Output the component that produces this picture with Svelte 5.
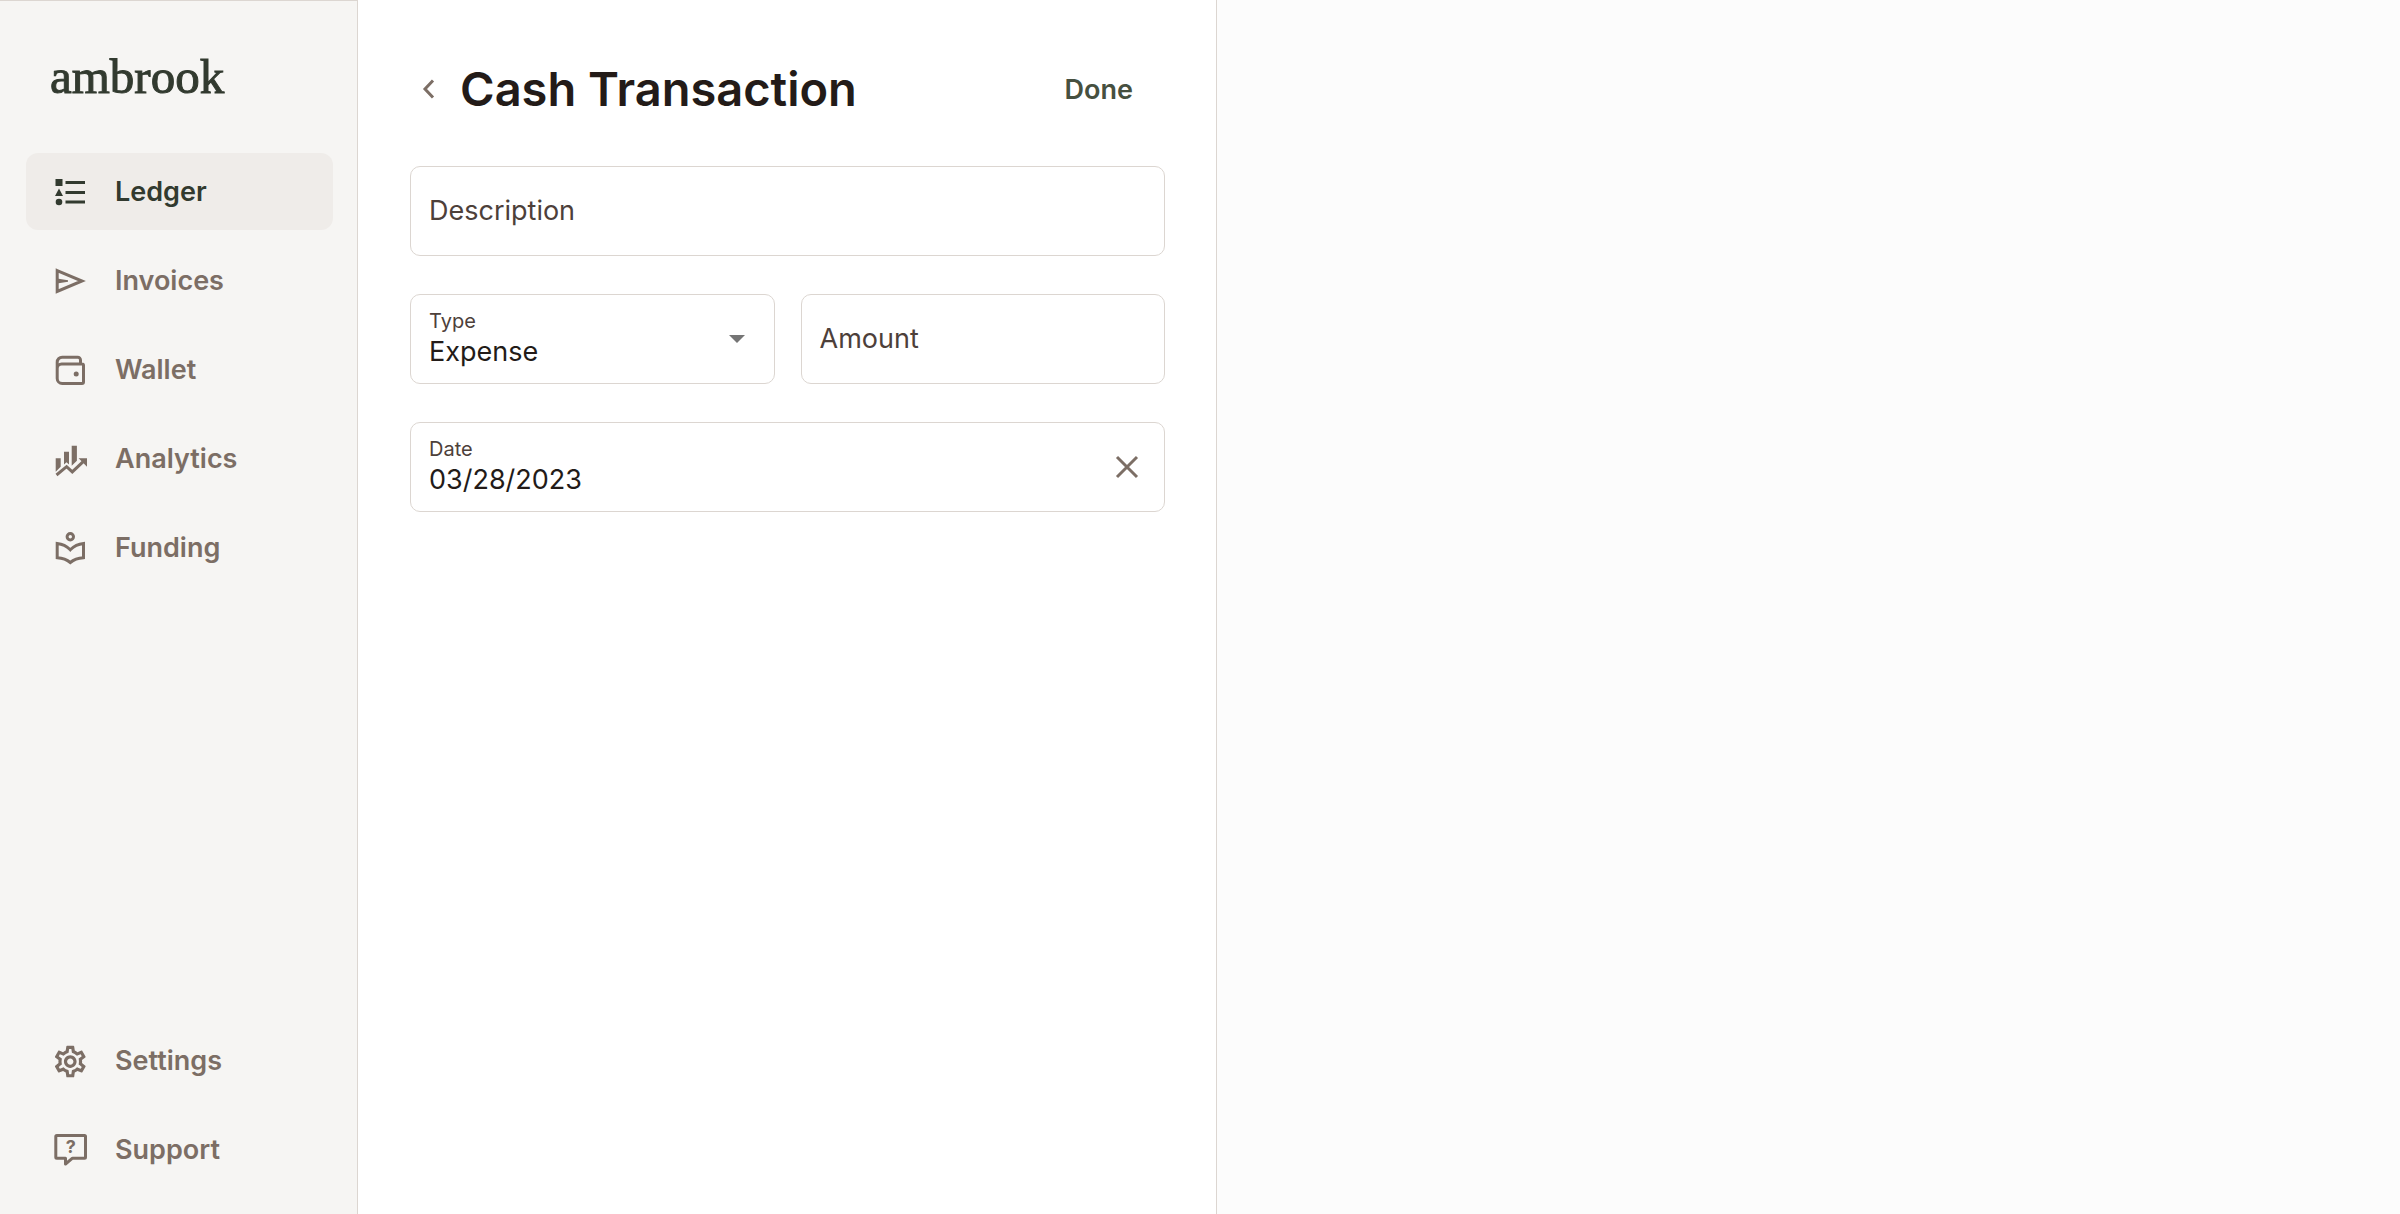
<script>
  let active = 'Ledger';

  const mainNav = ['Ledger', 'Invoices', 'Wallet', 'Analytics', 'Funding'];
  const footerNav = ['Settings', 'Support'];

  let description = '';
  let type = 'Expense';
  let amount = '';
  let date = '03/28/2023';
</script>

{#snippet icon(name)}
  <svg class="icon" viewBox="0 0 38 38" aria-hidden="true">
    {#if name === 'Ledger'}
      <path fill="currentColor" d="M4.5 6h7v7h-7zM8 15.5l4 7.5H4zM14.5 8H34v3H14.5zM14.5 18H34v3H14.5zM14.5 27.5H34v3H14.5z" />
      <circle cx="8" cy="29" r="3.3" fill="currentColor" />
    {:else if name === 'Invoices'}
      <path class="line" d="M6.2 8.6 31 19 6.2 29.4z" />
      <path fill="currentColor" d="M6 16.6 17 18.3v1.4L6 21.4z" />
    {:else if name === 'Wallet'}
      <path class="line" d="M29.5 13V9a2.8 2.8 0 0 0-2.8-2.8H11.2a5 5 0 0 0-5 5v16.3a5 5 0 0 0 5 5H31a1.5 1.5 0 0 0 1.5-1.5V14.5A1.5 1.5 0 0 0 31 13H10.7a4.5 4.5 0 0 0-4.5 4.5" />
      <circle cx="25.2" cy="23" r="2.5" fill="currentColor" />
    {:else if name === 'Analytics'}
      <path fill="currentColor" d="M4.7 18.3h5v8.5l-5 5zM13 11.7h5v12.8l-2.5-2.2-2.5 2.2zM20.7 5.7h5.2v15l-5.2 5zM27.6 18.3H36v8.4z" />
      <path class="line" d="M5.5 35 15.6 26.7l5.7 5.2L33 20.8" />
    {:else if name === 'Funding'}
      <circle class="line" cx="19.3" cy="7.8" r="3.2" />
      <path class="line" d="M6.2 14.4c5 .5 9.3 2.5 13.1 6.4 3.8-3.9 8.1-5.9 13.2-6.4v14.3c-5.1.3-9.4 1.5-13.2 4.8-3.8-3.3-8.1-4.5-13.1-4.8z" />
    {:else if name === 'Settings'}
      <path fill="currentColor" transform="translate(.3 .6) scale(1.58)" d="M19.43 12.98c.04-.32.07-.64.07-.98s-.03-.66-.07-.98l2.11-1.65c.19-.15.24-.42.12-.64l-2-3.46c-.09-.16-.26-.25-.44-.25-.06 0-.12.01-.17.03l-2.49 1c-.52-.4-1.08-.73-1.69-.98l-.38-2.65C14.46 2.18 14.25 2 14 2h-4c-.25 0-.46.18-.49.42l-.38 2.65c-.61.25-1.17.59-1.69.98l-2.49-1c-.06-.02-.12-.03-.18-.03-.17 0-.34.09-.43.25l-2 3.46c-.13.22-.07.49.12.64l2.11 1.65c-.04.32-.07.65-.07.98s.03.66.07.98l-2.11 1.65c-.19.15-.24.42-.12.64l2 3.46c.09.16.26.25.44.25.06 0 .12-.01.17-.03l2.49-1c.52.4 1.08.73 1.69.98l.38 2.65c.03.24.24.42.49.42h4c.25 0 .46-.18.49-.42l.38-2.65c.61-.25 1.17-.59 1.69-.98l2.49 1c.06.02.12.03.18.03.17 0 .34-.09.43-.25l2-3.46c.12-.22.07-.49-.12-.64l-2.11-1.65zm-1.98-1.71c.04.31.05.52.05.73 0 .21-.02.43-.05.73l-.14 1.13.89.7 1.08.84-.7 1.21-1.27-.51-1.04-.42-.9.68c-.43.32-.84.56-1.25.73l-1.06.43-.16 1.13-.2 1.35h-1.4l-.19-1.35-.16-1.13-1.06-.43c-.43-.18-.83-.41-1.23-.71l-.91-.7-1.06.43-1.27.51-.7-1.21 1.08-.84.89-.7-.14-1.13c-.03-.31-.05-.54-.05-.74s.02-.43.05-.73l.14-1.13-.89-.7-1.08-.84.7-1.21 1.27.51 1.04.42.9-.68c.43-.32.84-.56 1.25-.73l1.06-.43.16-1.13.2-1.35h1.39l.19 1.35.16 1.13 1.06.43c.43.18.83.41 1.23.71l.91.7 1.06-.43 1.27-.51.7 1.21-1.07.85-.89.7.14 1.13zM12 8c-2.21 0-4 1.79-4 4s1.79 4 4 4 4-1.79 4-4-1.79-4-4-4zm0 6c-1.1 0-2-.9-2-2s.9-2 2-2 2 .9 2 2-.9 2-2 2z" />
    {:else if name === 'Support'}
      <path class="line" stroke-linejoin="round" d="M5.8 4.5h27.7a1 1 0 0 1 1 1v20.7a1 1 0 0 1-1 1H21.5l-7 5.8v-5.8H5.8a1 1 0 0 1-1-1V5.5a1 1 0 0 1 1-1z" />
      <text x="19.7" y="22" text-anchor="middle">?</text>
    {/if}
  </svg>
{/snippet}

{#snippet navItem(name)}
  <a
    class="nav-item"
    class:active={active === name}
    href="#{name.toLowerCase()}"
    onclick={() => (active = name)}
  >
    {@render icon(name)}
    <span>{name}</span>
  </a>
{/snippet}

<div class="app">
  <aside class="sidebar">
    <a class="logo" href="#home">ambrook</a>
    <nav class="nav">
      {#each mainNav as name}
        {@render navItem(name)}
      {/each}
    </nav>
    <nav class="nav nav-footer">
      {#each footerNav as name}
        {@render navItem(name)}
      {/each}
    </nav>
  </aside>

  <main class="panel">
    <header class="header">
      <button class="back" aria-label="Back">
        <svg viewBox="0 0 16 22" aria-hidden="true"><path d="M12 2.5 4 11l8 8.5" /></svg>
      </button>
      <h1>Cash Transaction</h1>
      <button class="done" type="submit" form="transaction">Done</button>
    </header>

    <form id="transaction" class="form" onsubmit={(e) => e.preventDefault()}>
      <div class="field">
        <input id="description" type="text" placeholder=" " bind:value={description} />
        <label for="description">Description</label>
      </div>
      <div class="row">
        <div class="field">
          <select id="type" bind:value={type}>
            <option>Expense</option>
            <option>Income</option>
          </select>
          <label for="type">Type</label>
          <svg class="caret" viewBox="0 0 16 8" aria-hidden="true"><path d="M0 0h16L8 8z" /></svg>
        </div>
        <div class="field">
          <input id="amount" type="text" inputmode="decimal" placeholder=" " bind:value={amount} />
          <label for="amount">Amount</label>
        </div>
      </div>
      <div class="field">
        <input id="date" type="text" placeholder=" " bind:value={date} />
        <label for="date">Date</label>
        <button class="clear" type="button" aria-label="Clear date" onclick={() => (date = '')}>
          <svg viewBox="0 0 24 24" aria-hidden="true"><path d="M2 2l20 20M22 2 2 22" /></svg>
        </button>
      </div>
    </form>
  </main>

  <section class="detail" aria-label="Details"></section>
</div>

<style>
  :global(body) {
    margin: 0;
    background: #fcfcfc;
  }
  .app {
    display: flex;
    min-height: 100vh;
    font-family: Inter, 'Liberation Sans', sans-serif;
    font-size: 27px;
    color: #231b18;
  }
  .app * {
    box-sizing: border-box;
  }
  button, input, select {
    font: inherit;
    color: inherit;
    background: none;
    border: none;
    margin: 0;
    padding: 0;
  }
  button {
    cursor: pointer;
  }

  .sidebar {
    display: flex;
    flex-direction: column;
    flex: 0 0 358px;
    padding: 48px 24px 26px 26px;
    background: #f6f5f3;
    border-top: 1px solid #dcd6d1;
    border-right: 1px solid #dcd6d1;
  }
  .logo {
    margin: 0 24px 48px;
    font-family: 'Liberation Serif', serif;
    font-size: 49px;
    line-height: 56px;
    color: #323a2f;
    -webkit-text-stroke: 1px #323a2f;
    text-decoration: none;
  }
  .nav {
    display: flex;
    flex-direction: column;
    gap: 12px;
  }
  .nav-footer {
    margin-top: auto;
  }
  .nav-item {
    display: flex;
    align-items: center;
    gap: 26px;
    height: 77px;
    padding: 0 25px;
    border-radius: 12px;
    font-weight: 600;
    color: #7c6e65;
    text-decoration: none;
  }
  .nav-item.active {
    background: #efece9;
    color: #323a2f;
  }
  .icon {
    flex: none;
    width: 38px;
    height: 38px;
  }
  .icon .line {
    fill: none;
    stroke: currentColor;
    stroke-width: 3;
  }
  .icon text {
    font-size: 18px;
    font-weight: 700;
    fill: currentColor;
  }

  .panel {
    flex: 0 1 859px;
    padding: 52px 51px 52px 52px;
    background: #fff;
    border-right: 1px solid #dcd6d1;
  }
  .header {
    display: flex;
    align-items: center;
    height: 74px;
    margin-bottom: 40px;
  }
  .back {
    display: flex;
    padding: 11px;
  }
  .back svg {
    width: 16px;
    height: 22px;
    fill: none;
    stroke: #7c6e65;
    stroke-width: 3;
  }
  h1 {
    margin: 0 auto 0 12px;
    font-size: 47px;
    font-weight: 600;
    line-height: 60px;
    white-space: nowrap;
  }
  .done {
    padding: 0 32px;
    font-weight: 600;
    color: #465040;
  }

  .form {
    display: flex;
    flex-direction: column;
    gap: 38px;
  }
  .row {
    display: grid;
    grid-template-columns: repeat(2, minmax(0, 1fr));
    gap: 26px;
  }
  .field {
    position: relative;
    display: flex;
    align-items: center;
    height: 90px;
    border: 1px solid #dcd6d1;
    border-radius: 10px;
  }
  .field input, .field select {
    flex: 1;
    min-width: 0;
    height: 100%;
    padding: 25px 18px 0;
    appearance: none;
    outline: none;
  }
  .field:focus-within {
    border-color: #7c6e65;
  }
  .field label {
    position: absolute;
    left: 18px;
    top: 13px;
    font-size: 20px;
    line-height: 26px;
    color: #4d403a;
    pointer-events: none;
  }
  .field input:placeholder-shown:not(:focus) + label {
    top: 27px;
    font-size: 27px;
    line-height: 34px;
  }
  .caret {
    position: absolute;
    right: 29px;
    width: 16px;
    height: 8px;
    fill: #757575;
    pointer-events: none;
  }
  .clear {
    display: flex;
    padding: 12px 25px 12px 12px;
  }
  .clear svg {
    width: 24px;
    height: 24px;
    fill: none;
    stroke: #7c6e65;
    stroke-width: 3;
  }

  .detail {
    flex: 1;
    background: #fcfcfc;
  }
</style>
